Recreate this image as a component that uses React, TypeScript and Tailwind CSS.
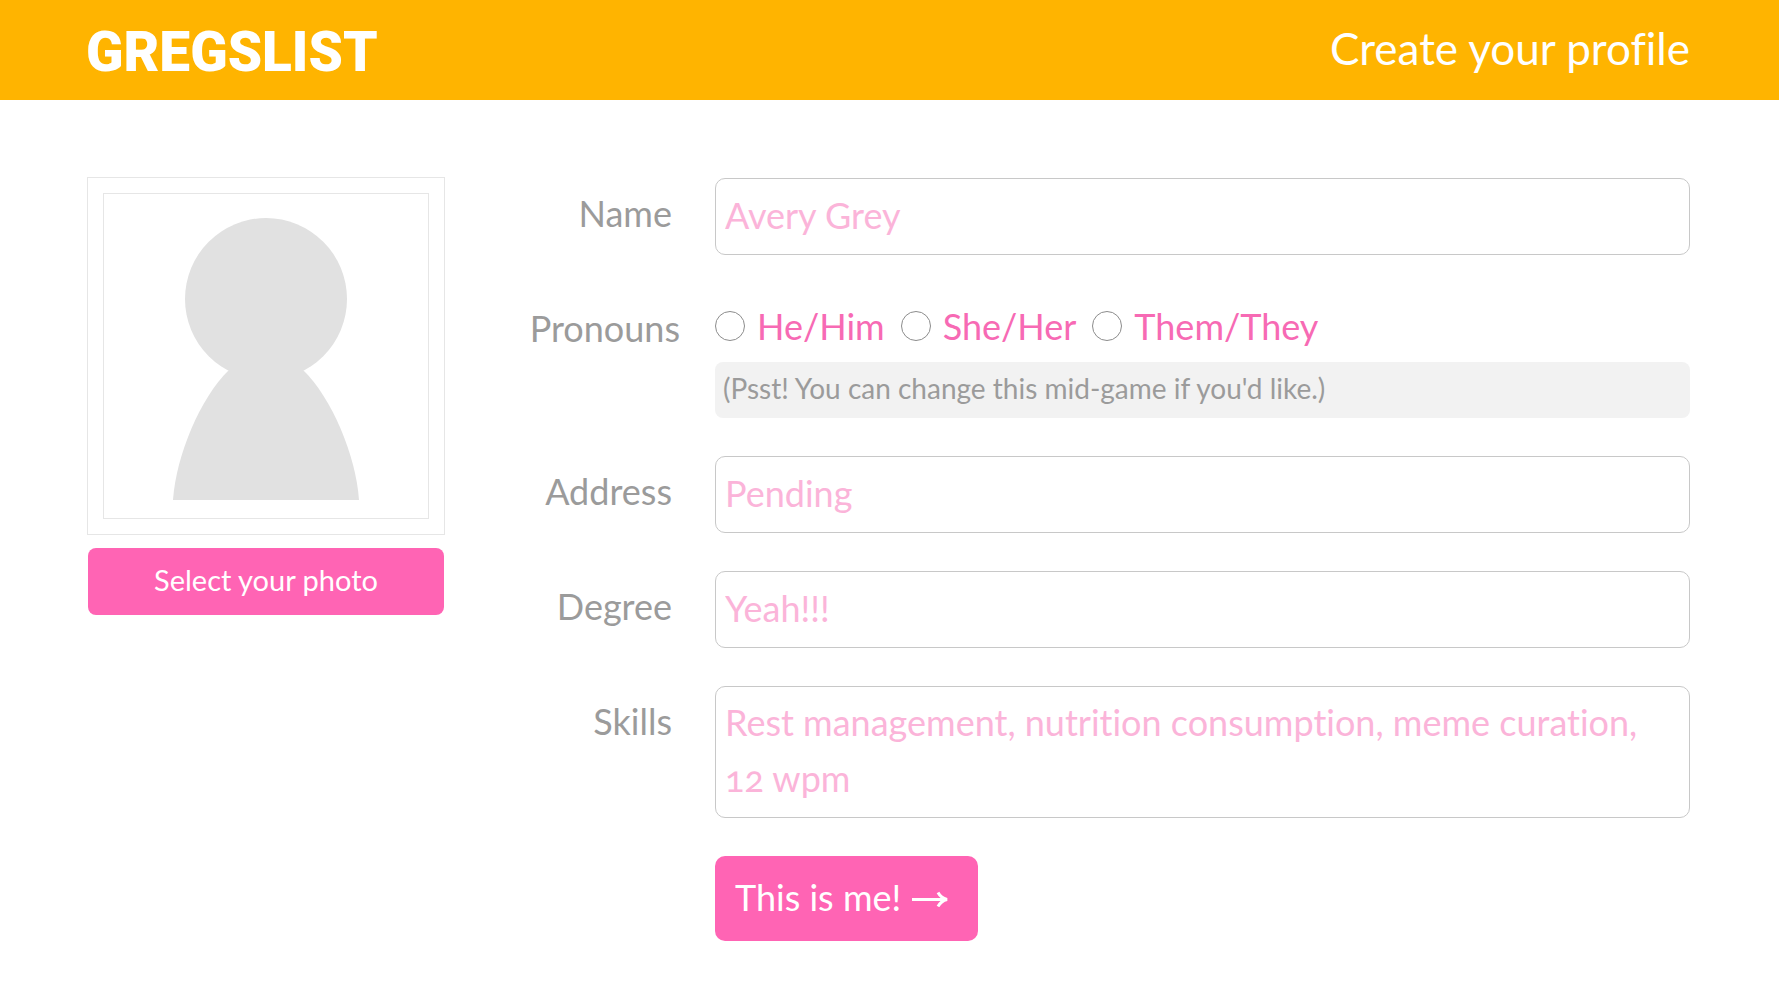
import type { ReactNode } from "react";

const field =
  "block w-full rounded-[10px] border border-[#c8c8c8] bg-white px-[9px] text-4xl leading-14 text-[#ff64b4] placeholder:text-[#fbb4d9] outline-none focus:border-[#ff64b4]";

function Row({ label, htmlFor, children }: { label: string; htmlFor: string; children: ReactNode }) {
  return (
    <div className="flex items-start">
      <label htmlFor={htmlFor} className="w-[184px] shrink-0 pt-[7px] text-right text-4xl leading-14">
        {label}
      </label>
      <div className="ml-[43px] min-w-0 flex-1">{children}</div>
    </div>
  );
}

function Pronoun({ label }: { label: string }) {
  return (
    <label className="flex items-center gap-3 text-4xl leading-14 text-[#f76ab4]">
      <input
        type="radio"
        name="pronouns"
        className="size-[30px] shrink-0 appearance-none rounded-full border border-[#8c8c8c] bg-white checked:border-8 checked:border-[#ff64b4]"
      />
      {label}
    </label>
  );
}

export default function App() {
  return (
    <div className="min-h-screen bg-white font-['Lato',sans-serif] text-[#9b9b9b] [font-variant-ligatures:none]">
      <header className="flex h-[100px] items-center justify-between bg-[#ffb400] pr-[89px] pl-[86px] text-white">
        <a href="#" className="pt-1 font-['Roboto',sans-serif] text-[55px] leading-none font-black">
          GREGSLIST
        </a>
        <h1 className="pb-1 text-[44px] leading-none">Create your profile</h1>
      </header>

      <main className="flex items-start pt-[78px] pr-[89px] pb-[60px] pl-[88px]">
        <section className="w-[356px] shrink-0">
          <div className="bg-white p-[15px] outline-1 outline-[#e6e6e6]">
            <svg viewBox="0 0 324 324" className="block w-full border border-[#e6e6e6]" role="img" aria-label="Profile photo">
              <g fill="#e1e1e1">
                <circle cx="162" cy="105" r="81" />
                <path d="M69 306C72 262 96 204 125 176H199C228 204 252 262 255 306Z" />
              </g>
            </svg>
          </div>
          <button type="button" className="mt-[14px] h-[67px] w-full rounded-lg bg-[#ff64b4] pb-1 text-[29px] text-white">
            Select your photo
          </button>
        </section>

        <form className="ml-[44px] flex min-w-0 flex-1 flex-col gap-[38px]" onSubmit={(e) => e.preventDefault()}>
          <Row label="Name" htmlFor="name">
            <input id="name" placeholder="Avery Grey" className={`${field} h-[77px] pb-1`} />
          </Row>

          <fieldset className="flex items-start" aria-labelledby="pronouns-label">
            <span id="pronouns-label" className="w-[192px] shrink-0 pt-[7px] text-right text-4xl leading-14">
              Pronouns
            </span>
            <div className="ml-[35px] min-w-0 flex-1">
              <div className="flex h-[69px] items-center gap-4 pb-[3px]">
                <Pronoun label="He/Him" />
                <Pronoun label="She/Her" />
                <Pronoun label="Them/They" />
              </div>
              <p className="rounded-lg bg-[#f2f2f2] px-2 pb-1 text-[28px] leading-13">
                (Psst! You can change this mid-game if you'd like.)
              </p>
            </div>
          </fieldset>

          <Row label="Address" htmlFor="address">
            <input id="address" placeholder="Pending" className={`${field} h-[77px] pb-1`} />
          </Row>
          <Row label="Degree" htmlFor="degree">
            <input id="degree" placeholder="Yeah!!!" className={`${field} h-[77px] pb-1`} />
          </Row>
          <Row label="Skills" htmlFor="skills">
            <textarea
              id="skills"
              rows={2}
              placeholder="Rest management, nutrition consumption, meme curation, 12 wpm"
              className={`${field} resize-none pt-[7px] pb-[11px] [font-variant-numeric:oldstyle-nums]`}
            />
          </Row>

          <button
            type="submit"
            className="ml-[227px] flex h-[85px] items-center gap-[11px] self-start rounded-[10px] bg-[#ff64b4] pr-[30px] pl-[20px] text-4xl text-white"
          >
            <span className="pb-1">This is me!</span>
            <svg viewBox="0 0 36 16" className="h-4 w-9" fill="none" stroke="currentColor" strokeWidth="3" aria-hidden="true">
              <path d="M0 8.5H33M26 1.5Q29 7 35 8.5Q29 10 26 15.5" />
            </svg>
          </button>
        </form>
      </main>
    </div>
  );
}
